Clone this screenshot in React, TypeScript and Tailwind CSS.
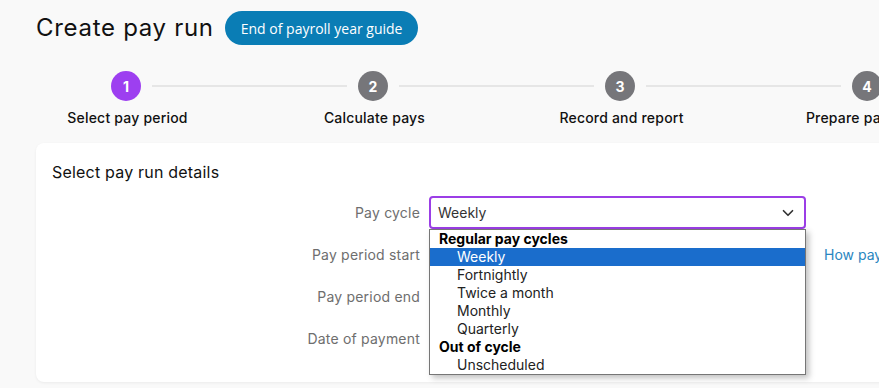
import { ChevronDown } from "lucide-react";

const STEPS = ["Select pay period", "Calculate pays", "Record and report", "Prepare payments"];

const FIELDS = ["Pay cycle", "Pay period start", "Pay period end", "Date of payment"];

const OPTIONS: { label: string; group?: boolean; selected?: boolean }[] = [
  { label: "Regular pay cycles", group: true },
  { label: "Weekly", selected: true },
  { label: "Fortnightly" },
  { label: "Twice a month" },
  { label: "Monthly" },
  { label: "Quarterly" },
  { label: "Out of cycle", group: true },
  { label: "Unscheduled" },
];

export default function App() {
  return (
    <div className="w-[879px] h-[388px] overflow-hidden bg-[#f9f9f9] text-[#1a1a1a] font-['Inter',sans-serif]">
      <div className="w-[1120px]">
        {/* Title */}
        <div className="flex items-center pl-[36px] pt-[11px] gap-[11px]">
          <h1 className="text-[24px] leading-[34px] tracking-[0.7px] text-[#111]">Create pay run</h1>
          <button className="h-[34px] px-[16px] rounded-full bg-[#0a7db5] text-white text-[14px] font-['Open_Sans',sans-serif]">
            End of payroll year guide
          </button>
        </div>

        {/* Stepper */}
        <div className="flex items-center pl-[111px] mt-[26px]">
          {STEPS.map((s, i) => (
            <div key={s} className="flex items-center">
              <div
                className={`w-[30px] h-[30px] rounded-full flex items-center justify-center text-white text-[14px] font-bold ${
                  i === 0 ? "bg-[#9d3ff0]" : "bg-[#76767a]"
                }`}
              >
                {i + 1}
              </div>
              {i < STEPS.length - 1 && <div className="w-[195px] h-[2px] bg-[#e6e6e6] mx-[11px]" />}
            </div>
          ))}
        </div>
        <div className="flex pl-[4px] mt-[8px]">
          {STEPS.map((s) => (
            <div key={s} className="w-[247px] text-center text-[14px] font-medium leading-[18px] tracking-[0.2px] text-[#111]">
              {s}
            </div>
          ))}
        </div>

        {/* Card */}
        <div className="ml-[36px] mt-[16px] w-[1060px] h-[239px] bg-white rounded-[8px] shadow-[0_1px_3px_rgba(0,0,0,0.06)] pt-[19px] pl-[16px]">
          <h2 className="text-[16px] leading-[20px] tracking-[0.2px] text-[#111]">Select pay run details</h2>
          <div className="relative mt-[14px] flex flex-col gap-[9px]">
            {FIELDS.map((f, i) => (
              <div key={f} className="flex items-center h-[33px]">
                <div className="w-[368px] text-right text-[14px] text-[#6e6e6e] tracking-[0.2px]">{f}</div>
                <div className="ml-[9px]">
                  {i === 0 ? (
                    <div className="w-[377px] h-[33px] rounded-[4px] border-2 border-[#9b3ee6] flex items-center justify-between pl-[7px] pr-[7px] text-[14px] text-[#333]">
                      <span>Weekly</span>
                      <ChevronDown size={18} strokeWidth={2.25} className="text-[#333]" />
                    </div>
                  ) : (
                    <div className="w-[377px] h-[33px] rounded-[4px] border border-[#c8c8c8]" />
                  )}
                </div>
                {i === 1 && <a className="ml-[18px] text-[14px] text-[#2a86c0]">How pay periods work</a>}
              </div>
            ))}

            {/* Native dropdown list */}
            <div className="absolute left-[377px] top-[33px] w-[377px] bg-white border border-[#767676] shadow-[3px_3px_6px_rgba(0,0,0,0.25)] text-[14px] leading-[18px]">
              {OPTIONS.map((o) => (
                <div
                  key={o.label}
                  className={`h-[18px] ${o.group ? "pl-[9px] font-bold text-black" : "pl-[27px] text-[#222]"} ${
                    o.selected ? "bg-[#1a6dcc] text-white" : ""
                  }`}
                >
                  {o.label}
                </div>
              ))}
            </div>
          </div>
        </div>
      </div>
    </div>
  );
}
